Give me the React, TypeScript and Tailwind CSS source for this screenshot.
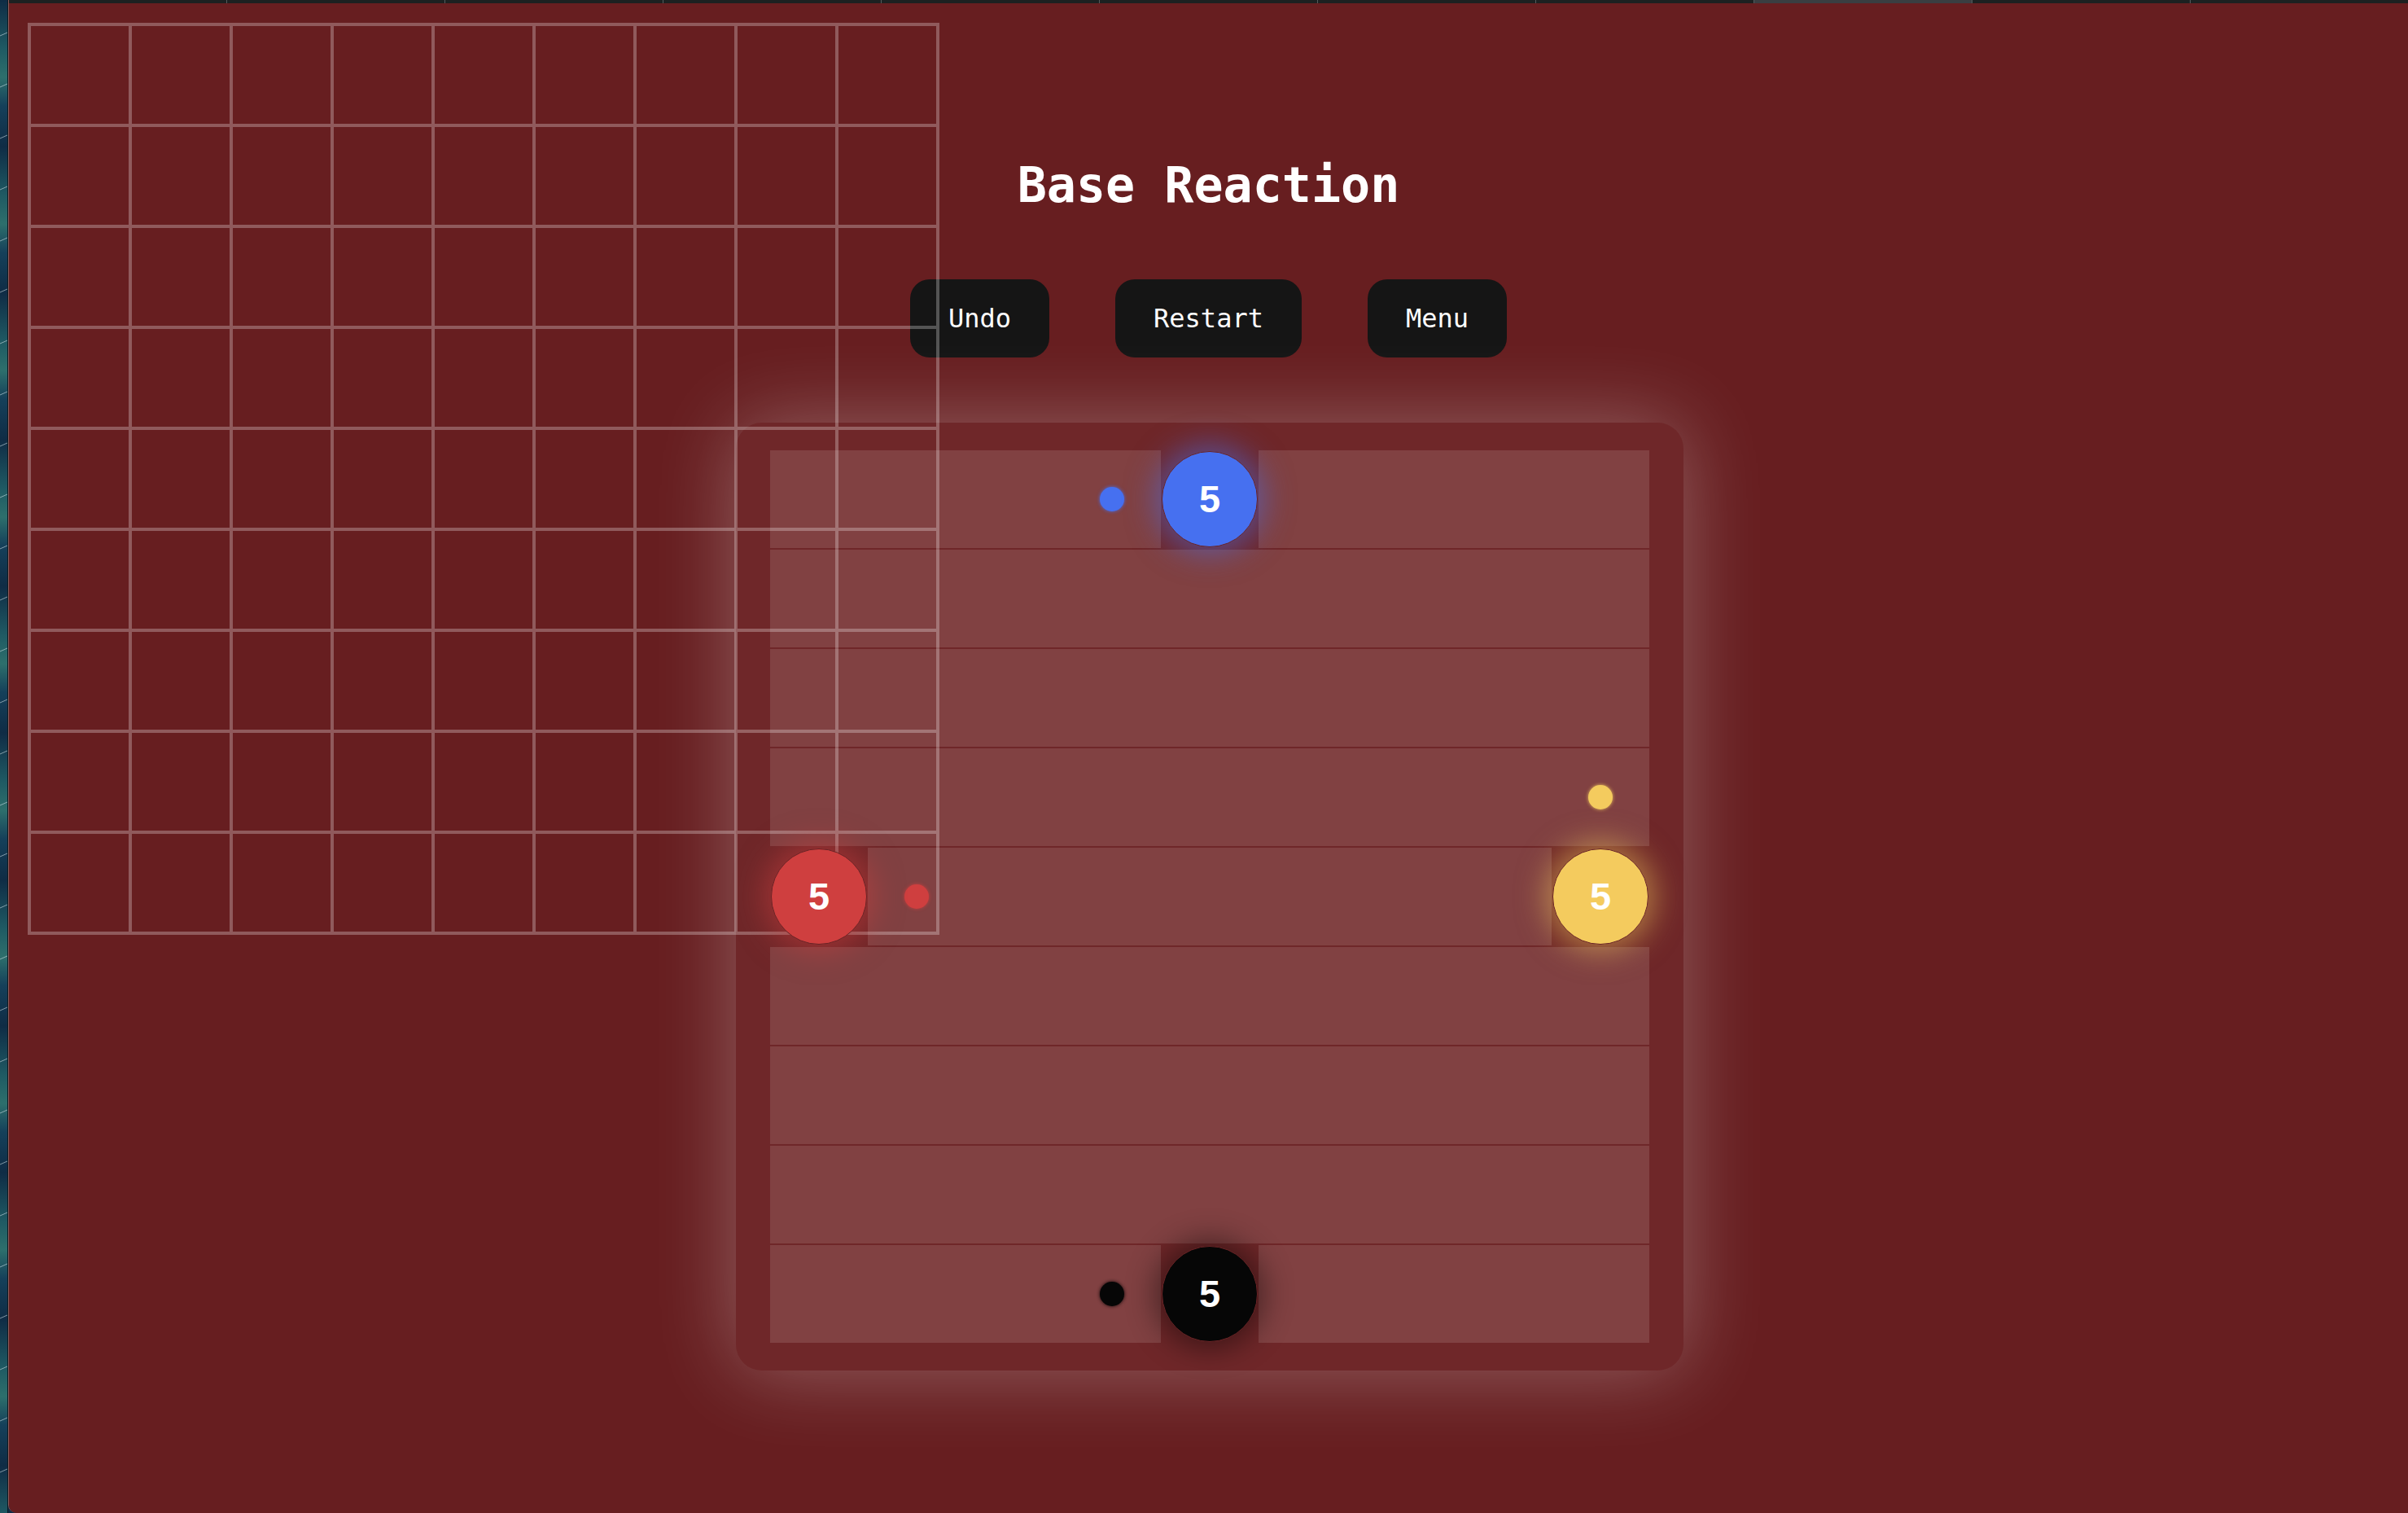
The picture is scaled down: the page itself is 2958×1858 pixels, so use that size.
import React from "react";

type Mark = { col: number; row: number; className: string };

const pieces: Mark[] = [
  { col: 4, row: 0, className: "bg-[#4670f0] shadow-[0_0_36px_8px_rgba(70,112,240,0.5)]" },
  { col: 0, row: 4, className: "bg-[#cf3f3f] shadow-[0_0_36px_8px_rgba(207,63,63,0.5)]" },
  { col: 8, row: 4, className: "bg-[#f4cb5e] shadow-[0_0_36px_8px_rgba(244,203,94,0.5)]" },
  { col: 4, row: 8, className: "bg-[#060606] shadow-[0_0_36px_8px_rgba(0,0,0,0.45)]" },
];

const dots: Mark[] = [
  { col: 3, row: 0, className: "bg-[#4670f0] shadow-[0_0_4px_rgba(70,112,240,0.9)]" },
  { col: 1, row: 4, className: "bg-[#cf3f3f] shadow-[0_0_4px_rgba(207,63,63,0.9)]" },
  { col: 8, row: 3, className: "bg-[#f4cb5e] shadow-[0_0_4px_rgba(244,203,94,0.9)]" },
  { col: 3, row: 8, className: "bg-[#060606] shadow-[0_0_4px_rgba(0,0,0,0.9)]" },
];

const rows = Array.from({ length: 9 }, (_, i) => i);

function Cell(props: { col: number; row: number }) {
  const piece = pieces.find((p) => p.col === props.col && p.row === props.row);
  const dot = dots.find((d) => d.col === props.col && d.row === props.row);
  return (
    <div
      className={`w-[120px] h-[120px] flex items-center justify-center ${
        piece ? "" : "bg-[#814142]"
      }`}
    >
      {piece && (
        <div
          className={`relative z-10 w-[118px] h-[118px] rounded-full border border-[#6a2426] flex items-center justify-center text-white text-[47px] font-bold font-['Liberation_Sans',Arial,sans-serif] ${piece.className}`}
        >
          5
        </div>
      )}
      {dot && <div className={`w-[30px] h-[30px] rounded-full ${dot.className}`} />}
    </div>
  );
}

function Wallpaper() {
  return (
    <div className="relative w-[10px] h-full bg-[repeating-linear-gradient(180deg,#0f2c45_0px,#1f5a63_60px,#2d6f6c_95px,#15405a_130px,#0f2c45_180px)] border-r border-[#0b1a22]">
      <svg className="absolute inset-0" width="10" height="1858">
        {Array.from({ length: 30 }).map((_, i) => (
          <line
            key={i}
            x1="0"
            y1={44 + i * 63}
            x2="9"
            y2={40 + i * 63}
            stroke="rgba(220,235,240,0.55)"
            strokeWidth="1"
          />
        ))}
      </svg>
    </div>
  );
}

function TabStrip() {
  return (
    <div className="flex h-[4px] bg-[#1c2121] shrink-0">
      <div className="w-[268px]" />
      {Array.from({ length: 10 }).map((_, i) => (
        <div
          key={i}
          className={`w-[268.7px] border-l border-[#555b5c] ${i === 7 ? "bg-[#3a3e41]" : ""}`}
        />
      ))}
    </div>
  );
}

function GuideGrid() {
  return (
    <div className="absolute left-[23px] top-[24px] z-0 pointer-events-none border-l-4 border-t-4 border-[rgba(255,255,255,0.27)] grid grid-cols-9">
      {Array.from({ length: 81 }).map((_, i) => (
        <div
          key={i}
          className="w-[124px] h-[124px] border-r-4 border-b-4 border-[rgba(255,255,255,0.27)]"
        />
      ))}
    </div>
  );
}

export default function App() {
  return (
    <div className="flex w-[2958px] h-[1858px] overflow-hidden bg-[#0f2c45]">
      <Wallpaper />
      <div className="flex-1 flex flex-col border-l border-[#8e5d5d] rounded-bl-[10px] overflow-hidden">
        <TabStrip />
        <main className="relative flex-1 flex flex-col items-center bg-[#671e20] pt-[193px]">
          <GuideGrid />
          <h1 className="text-white text-[60px] leading-none font-bold font-['DejaVu_Sans_Mono',monospace]">
            Base Reaction
          </h1>
          <div className="flex gap-[81px] mt-[86px]">
            {["Undo", "Restart", "Menu"].map((label) => (
              <button
                key={label}
                className="h-[96px] px-[47px] rounded-[24px] bg-[#151515] text-white text-[32px] font-['DejaVu_Sans_Mono',monospace] flex items-center"
              >
                {label}
              </button>
            ))}
          </div>
          <div className="mt-[80px] ml-[3px] px-[42px] py-[34px] rounded-[32px] bg-[#6f2729] shadow-[0_0_100px_rgba(255,255,255,0.3)]">
            <div className="flex flex-col gap-y-[2px]">
              {rows.map((r) => (
                <div key={r} className="flex">
                  {rows.map((c) => (
                    <Cell key={c} col={c} row={r} />
                  ))}
                </div>
              ))}
            </div>
          </div>
        </main>
      </div>
    </div>
  );
}
